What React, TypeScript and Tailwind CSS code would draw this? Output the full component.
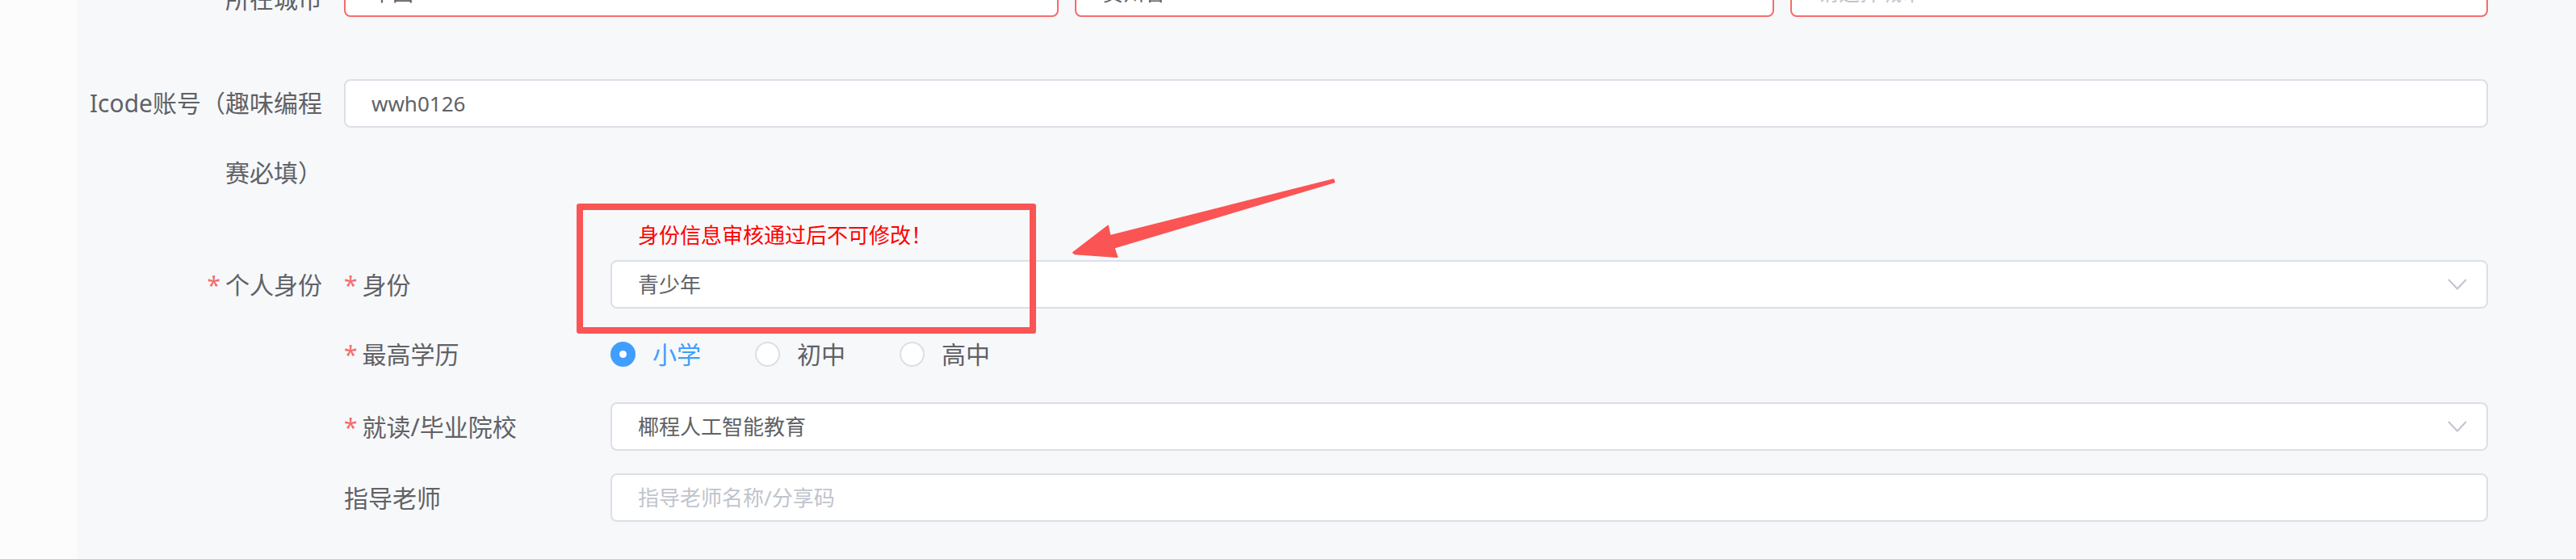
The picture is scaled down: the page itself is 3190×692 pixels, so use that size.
import React from "react";

const FONT = { fontFamily: '"Noto Sans", "Noto Sans CJK SC", sans-serif' };

function Chevron() {
  return (
    <svg width="24" height="14" viewBox="0 0 24 14" className="shrink-0">
      <polyline points="1,1 12,12.5 23,1" fill="none" stroke="#c0c4cc" strokeWidth="2" />
    </svg>
  );
}

function Field({
  text,
  placeholder,
  select,
  error,
  className = "",
}: {
  text?: string;
  placeholder?: string;
  select?: boolean;
  error?: boolean;
  className?: string;
}) {
  return (
    <div
      className={`flex h-[60px] items-center rounded-[8px] border-2 bg-white pl-[32px] pr-[24px] text-[26px] ${
        error ? "border-[#f56c6c]" : "border-[#dcdfe6]"
      } ${className}`}
    >
      <span className={`flex-1 truncate ${text ? "text-[#606266]" : "text-[#c0c4cc]"}`}>
        {text ?? placeholder}
      </span>
      {select && <Chevron />}
    </div>
  );
}

function Req() {
  return <span className="mr-[6px] text-[#f56c6c]">*</span>;
}

function Radio({ label, checked }: { label: string; checked?: boolean }) {
  return (
    <div className="mr-[67px] flex items-center">
      {checked ? (
        <span className="flex h-[31px] w-[31px] items-center justify-center rounded-full bg-[#409eff]">
          <span className="h-[9px] w-[9px] rounded-full bg-white" />
        </span>
      ) : (
        <span className="h-[31px] w-[31px] rounded-full border-2 border-[#dcdfe6] bg-white" />
      )}
      <span className={`ml-[21px] text-[30px] ${checked ? "text-[#409eff]" : "text-[#606266]"}`}>
        {label}
      </span>
    </div>
  );
}

export default function App() {
  return (
    <div className="relative flex h-[692px] w-[3190px] overflow-hidden" style={FONT}>
      <div className="w-[95px] shrink-0 bg-[#fcfcfc]" />
      <div className="flex-1 bg-[#f7f8fa]">
        <div className="-mt-[44px] w-[2986px] text-[#606266]">
          {/* 所在城市 */}
          <div className="flex">
            <div className="w-[304px] shrink-0 text-right text-[30px] leading-[86px]">所在城市</div>
            <div className="ml-[27px] mt-[5px] flex flex-1 gap-[20px]">
              <Field text="中国" select error className="w-[885px]" />
              <Field text="贵州省" select error className="w-[866px]" />
              <Field placeholder="请选择城市" select error className="flex-1" />
            </div>
          </div>

          {/* Icode账号 */}
          <div className="mt-[43px] flex">
            <div className="w-[304px] shrink-0 text-right text-[30px] leading-[86px]">
              Icode账号（趣味编程赛必填）
            </div>
            <div className="ml-[27px] mt-[13px] flex-1">
              <Field text="wwh0126" />
            </div>
          </div>

          {/* 个人身份 */}
          <div className="flex">
            <div className="mt-[65px] flex h-[60px] w-[304px] shrink-0 items-center justify-end text-[30px]">
              <Req />
              个人身份
            </div>
            <div className="ml-[27px] flex-1">
              <div className="ml-[330px] mt-[16px] pl-[34px] text-[26px] leading-[36px] text-[#ff0000]">
                身份信息审核通过后不可修改！
              </div>

              <div className="mt-[13px] flex h-[60px] items-center">
                <div className="flex w-[330px] shrink-0 items-center text-[30px]">
                  <Req />
                  身份
                </div>
                <Field text="青少年" select className="flex-1" />
              </div>

              <div className="mt-[26px] flex h-[60px] items-center">
                <div className="flex w-[330px] shrink-0 items-center text-[30px]">
                  <Req />
                  最高学历
                </div>
                <div className="flex items-center">
                  <Radio label="小学" checked />
                  <Radio label="初中" />
                  <Radio label="高中" />
                </div>
              </div>

              <div className="mt-[30px] flex h-[60px] items-center">
                <div className="flex w-[330px] shrink-0 items-center text-[30px]">
                  <Req />
                  就读/毕业院校
                </div>
                <Field text="椰程人工智能教育" select className="flex-1" />
              </div>

              <div className="mt-[28px] flex h-[60px] items-center">
                <div className="w-[330px] shrink-0 text-[30px]">指导老师</div>
                <Field placeholder="指导老师名称/分享码" className="flex-1" />
              </div>
            </div>
          </div>
        </div>
      </div>

      {/* callout frame and arrow */}
      <div className="pointer-events-none absolute left-[714px] top-[252px] h-[161px] w-[569px] rounded-[3px] border-[8px] border-[#fb5454]" />
      <svg
        className="pointer-events-none absolute left-0 top-0"
        width="3190"
        height="692"
        viewBox="0 0 3190 692"
      >
        <polygon
          points="1651.5,222 1374.7,291.7 1372.2,279.3 1328.8,312.7 1331,314.5 1383.7,318.3 1379.8,306.7 1652.5,225.5"
          fill="#fb5454"
          stroke="#fb5454"
          strokeWidth="1.5"
          strokeLinejoin="round"
        />
      </svg>
    </div>
  );
}
